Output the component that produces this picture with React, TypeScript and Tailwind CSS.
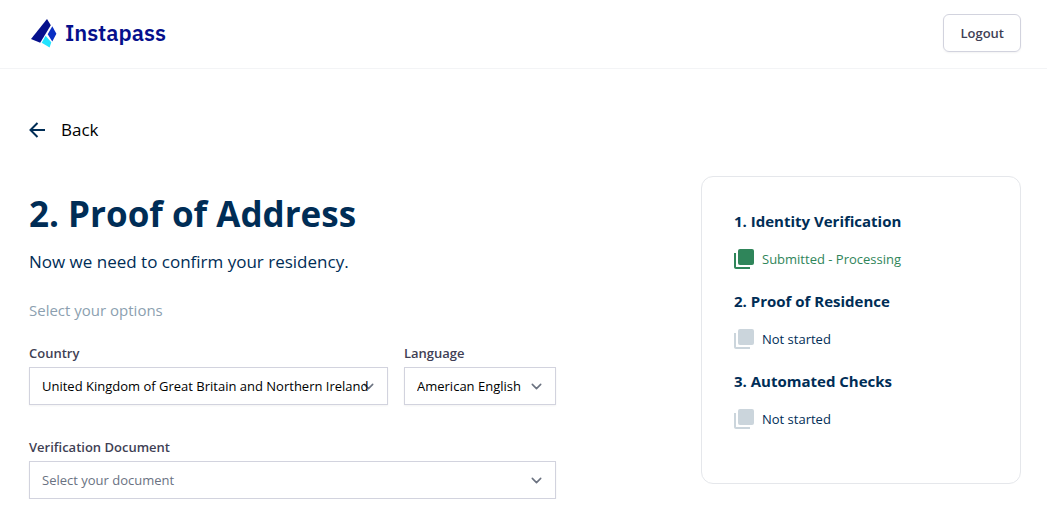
import { useState } from 'react'
import clsx from 'clsx'

const COUNTRIES = ['United Kingdom of Great Britain and Northern Ireland', 'United States of America', 'Nigeria', 'Canada']
const LANGUAGES = ['American English', 'British English', 'French']
const DOCUMENTS = ['Bank statement', 'Utility bill', 'Tenancy agreement']

const STEPS = [
  { title: '1. Identity Verification', status: 'Submitted - Processing', submitted: true },
  { title: '2. Proof of Residence', status: 'Not started', submitted: false },
  { title: '3. Automated Checks', status: 'Not started', submitted: false },
]

function Logo() {
  return (
    <a href="#" className="flex items-center gap-2">
      <svg width="26" height="29" viewBox="0 0 26 29" aria-hidden="true">
        <path d="M16 0 19.800 6.300 9.200 23.700 0 20Z" fill="#05108c" />
        <path d="M21.300 7.300 25.400 14.800 21.300 22.600 16.700 15.200Z" fill="#0a2fc4" />
        <path d="M14.600 16.700 20.300 23.200 18.600 28.500 10.700 23.800Z" fill="#22e3ff" />
      </svg>
      <span className="font-['IBM_Plex_Sans','Noto_Sans',sans-serif] text-[22px] leading-7 font-semibold text-[#05108c]">Instapass</span>
    </a>
  )
}

function StackIcon({ className }: { className: string }) {
  return (
    <svg width="20" height="20" viewBox="0 0 20 20" fill="currentColor" className={className} aria-hidden="true">
      <path d="M2 4H0v14c0 1.100.9 2 2 2h14v-2H2V4z" />
      <rect x="4" width="16" height="16" rx="2" />
    </svg>
  )
}

interface SelectFieldProps {
  id: string
  label: string
  options: string[]
  placeholder?: string
  className?: string
}

function SelectField({ id, label, options, placeholder, className }: SelectFieldProps) {
  const [value, setValue] = useState(placeholder ? '' : options[0])

  return (
    <div className={className}>
      <label htmlFor={id} className="block text-[13px] leading-5 font-semibold text-[#3f3f55]">{label}</label>
      <div className="relative mt-1 bg-white shadow-xs">
        <svg
          viewBox="0 0 20 20"
          fill="none"
          stroke="#6b7280"
          strokeWidth="1.5"
          strokeLinecap="round"
          strokeLinejoin="round"
          className="absolute top-[9px] right-[9px] size-[21px]"
          aria-hidden="true"
        >
          <path d="M6 8l4 4 4-4" />
        </svg>
        <select
          id={id}
          value={value}
          onChange={e => setValue(e.target.value)}
          className={clsx(
            'relative block w-full appearance-none border border-[#d2d3de] bg-transparent py-2 pl-3 text-[13px] leading-5 focus:outline-none focus:ring-1 focus:ring-blue-500',
            value ? 'text-black' : 'text-gray-500'
          )}
        >
          {placeholder && <option value="">{placeholder}</option>}
          {options.map(o => (
            <option key={o} value={o}>{o}</option>
          ))}
        </select>
      </div>
    </div>
  )
}

export default function App() {
  return (
    <div className="bg-white font-['Segoe_UI','Open_Sans',sans-serif] text-[#002d56]">
      <header className="flex items-center justify-between border-b border-gray-100 pt-3.5 pr-[26px] pb-4 pl-[31px]">
        <Logo />
        <button className="rounded-md border border-[#d2d3de] px-4 py-2 text-[13px] leading-5 font-semibold text-[#3f3f55] shadow-xs hover:bg-gray-50">
          Logout
        </button>
      </header>

      <main className="pt-[47px] pr-[26px] pl-[29px]">
        <a href="#" className="inline-flex items-center gap-4 text-[17px] leading-7 text-black">
          <svg width="16" height="16" viewBox="0 0 16 16" fill="none" stroke="#002d56" strokeWidth="2" aria-hidden="true">
            <path d="M16 8H1.500M8.500 1 1.500 8l7 7" />
          </svg>
          Back
        </a>

        <div className="mt-8 flex items-start justify-between gap-8">
          <section className="max-w-[527px] flex-1 pt-4">
            <h1 className="text-[35px] leading-11 font-bold">2. Proof of Address</h1>
            <p className="mt-3 text-[17px] leading-7">Now we need to confirm your residency.</p>
            <p className="mt-5 text-[15px] leading-7 text-[#8c9fb0]">Select your options</p>

            <form className="mt-[19px] space-y-8">
              <div className="flex gap-4">
                <SelectField id="country" label="Country" options={COUNTRIES} className="min-w-0 flex-1" />
                <SelectField id="language" label="Language" options={LANGUAGES} className="w-[152px]" />
              </div>
              <SelectField
                id="document"
                label="Verification Document"
                options={DOCUMENTS}
                placeholder="Select your document"
              />
            </form>
          </section>

          <aside className="w-80 rounded-xl border border-gray-200 px-8 pt-8 pb-[50px]">
            <ol className="space-y-4">
              {STEPS.map(s => (
                <li key={s.title}>
                  <h2 className="text-[15px] leading-6 font-bold">{s.title}</h2>
                  <div className="mt-3 flex items-center gap-2 text-[13px] leading-7">
                    <StackIcon className={s.submitted ? 'text-[#2f855a]' : 'text-[#cbd5dc]'} />
                    <span className={clsx(s.submitted && 'text-[#2f855a]')}>{s.status}</span>
                  </div>
                </li>
              ))}
            </ol>
          </aside>
        </div>
      </main>
    </div>
  )
}
